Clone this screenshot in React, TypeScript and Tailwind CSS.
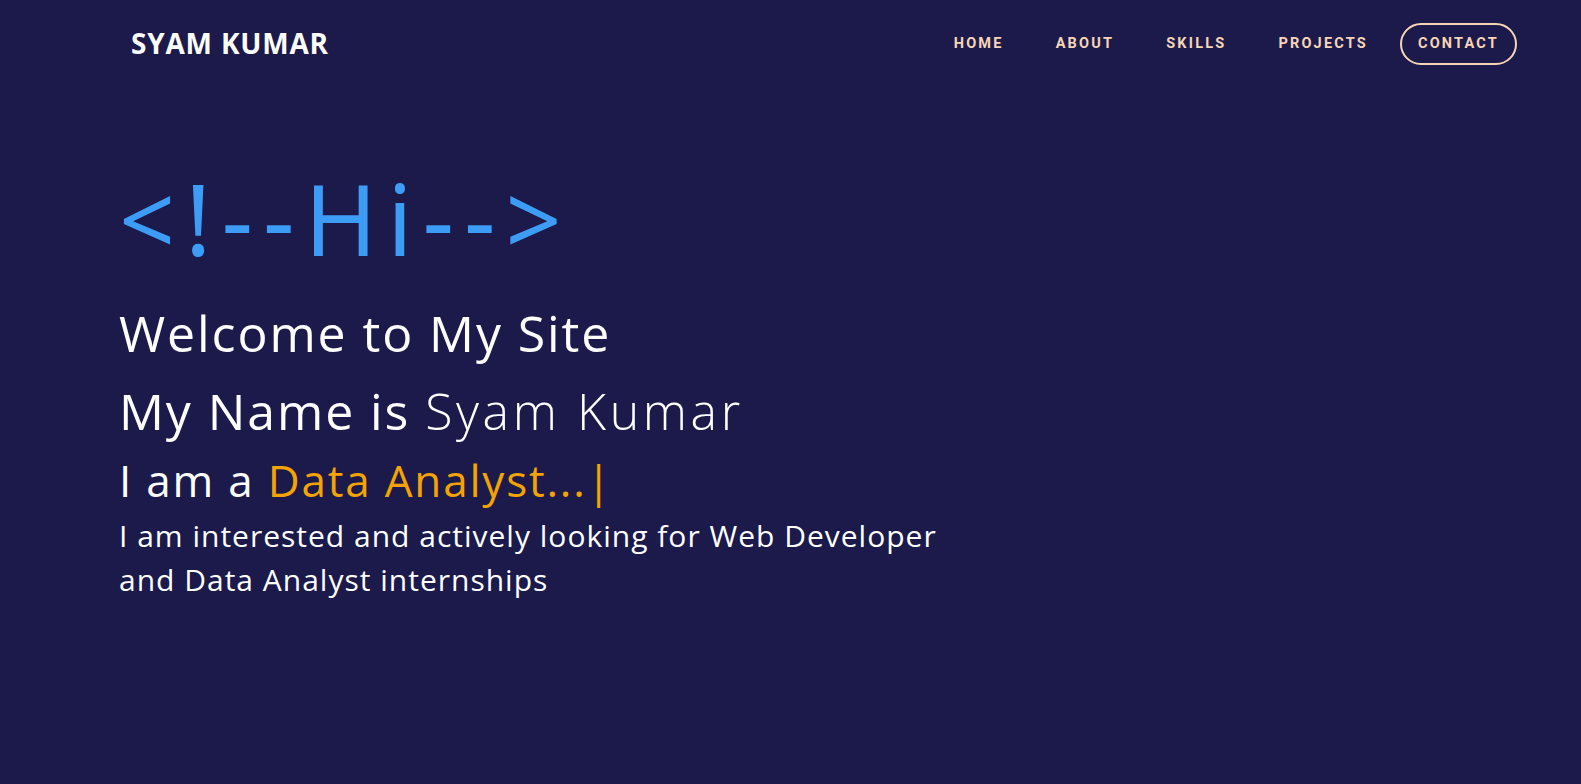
const navLinks = ['Home', 'About', 'Skills', 'Projects']

export default function App() {
  return (
    <div className="min-h-[784px] w-full bg-[#1b1a4b] font-['Open_Sans',sans-serif] text-white">
      <header className="flex h-[86px] items-center justify-between pl-[131px] pr-[64px]">
        <a href="#" className="font-['Open_Sans',sans-serif] text-[28px] font-bold tracking-[0.8px] text-white">
          SYAM KUMAR
        </a>
        <nav className="flex items-center gap-[52px] pt-[2px] font-['Roboto',sans-serif] text-[14.5px] font-bold uppercase tracking-[2.2px] text-[#f8d5b6]">
          {navLinks.map((link) => (
            <a key={link} href="#">
              {link}
            </a>
          ))}
          <a href="#" className="-ml-[20px] rounded-full border-2 border-[#f8d5b6] px-[16px] py-[8px]">
            Contact
          </a>
        </nav>
      </header>

      <main className="flex flex-col pl-[119px] pt-[74px]">
        <h1 className="font-['Noto_Sans',sans-serif] text-[98px] font-normal leading-[116px] tracking-[10px] text-[#3d9df6]">
          {'<!--Hi-->'}
        </h1>
        <h2 className="mt-[18px] text-[50px] leading-[78px] tracking-[1.9px]">Welcome to My Site</h2>
        <h2 className="text-[50px] leading-[78px] tracking-[1.9px]">
          My Name is <span className="font-light tracking-[3.6px]">Syam Kumar</span>
        </h2>
        <h3 className="-mt-[3px] text-[44px] leading-[66px] tracking-[1.8px]">
          I am a <span className="text-[#f5a300]">Data Analyst...</span>
          <span className="text-[#f5a300]">|</span>
        </h3>
        <p className="mt-[1px] max-w-[830px] text-[30px] leading-[44px] tracking-[1px]">
          I am interested and actively looking for Web Developer and Data Analyst internships
        </p>
      </main>
    </div>
  )
}
